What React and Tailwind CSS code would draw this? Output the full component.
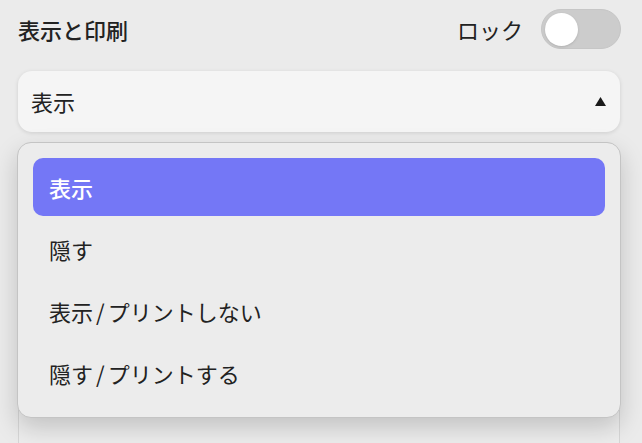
import { useState } from "react";

const options = [
  { key: "show", label: ["表示"] },
  { key: "hide", label: ["隠す"] },
  { key: "show-noprint", label: ["表示", "プリントしない"] },
  { key: "hide-print", label: ["隠す", "プリントする"] },
];

// slash between the two halves is a bit airier in the original
const Label = ({ parts }) => (
  <>
    {parts[0]}
    {parts[1] && (
      <>
        <span className="mx-[3px]">/</span>
        {parts[1]}
      </>
    )}
  </>
);

const App = () => {
  const [selected, setSelected] = useState(0);
  const [locked, setLocked] = useState(false);

  return (
    <div
      className="h-[443px] w-[642px] overflow-hidden bg-[#ebebeb] pl-[18px] pr-[22px] text-[#222222]"
      style={{ fontFamily: '"Noto Sans CJK JP", "Noto Sans", sans-serif' }}
    >
      {/* Header */}
      <div className="flex h-[62px] items-center justify-between pb-1">
        <h1 className="text-[22px] font-medium">表示と印刷</h1>
        <div className="flex items-center gap-[18px]">
          <span className="text-[22px]">ロック</span>
          <button
            onClick={() => setLocked(!locked)}
            className="-mr-[1px] flex h-[40px] w-[80px] items-center rounded-full border border-[#c6c6c6] bg-[#cccccc] px-[3px]"
          >
            <span className="h-[33px] w-[33px] rounded-full bg-white shadow-sm" />
          </button>
        </div>
      </div>

      {/* Select + dropdown */}
      <div className="relative mt-[9px]">
        <div className="flex h-[61px] items-center justify-between rounded-[14px] bg-[#f5f5f5] pl-[13px] pr-[14px] shadow-[0_1px_4px_rgba(0,0,0,0.12)]">
          <span className="text-[22px]">
            <Label parts={options[selected].label} />
          </span>
          <svg width="11" height="9" viewBox="0 0 11 9">
            <path d="M5.5 0 L11 9 L0 9 Z" fill="#1a1a1a" />
          </svg>
        </div>

        {/* Panel behind the menu */}
        <div className="mt-[10px] h-[320px] rounded-[14px] border border-[#d6d6d6] bg-[#ededed]" />

        {/* Menu */}
        <div className="absolute left-[-1px] right-[-1px] top-[71px] flex flex-col gap-[4px] rounded-[14px] border border-[#c4c4c4] bg-[#ececec] p-[15px] shadow-[0_10px_24px_rgba(0,0,0,0.18)]">
          {options.map((opt, i) => (
            <button
              key={opt.key}
              onClick={() => setSelected(i)}
              className={
                i === selected
                  ? "flex h-[58px] items-center rounded-[10px] bg-[#7477f6] px-[16px] text-left text-[22px] font-medium text-white"
                  : "flex h-[58px] items-center rounded-[10px] px-[16px] text-left text-[22px] text-[#222222]"
              }
            >
              <Label parts={opt.label} />
            </button>
          ))}
        </div>
      </div>
    </div>
  );
};

export default App;
